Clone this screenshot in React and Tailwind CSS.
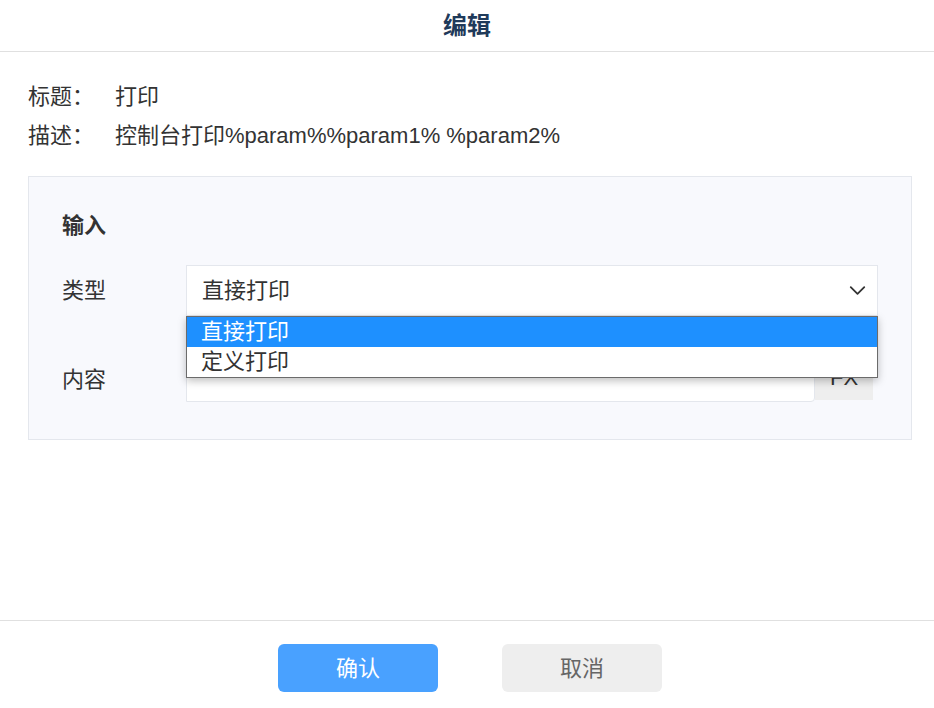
import { ChevronDown } from 'lucide-react';

const FONT = '[font-family:"Liberation_Sans","Noto_Sans_CJK_SC",sans-serif]';

function InfoRow({ label, value }) {
    return (
        <div className="flex h-[39px] items-center">
            <span className="w-[87px] text-[#333]">{label}</span>
            <span className="text-[#333]">{value}</span>
        </div>
    );
}

export default function App() {
    return (
        <div className={`flex h-[708px] w-[934px] flex-col bg-white text-[22px] ${FONT}`}>
            {/* Header */}
            <div className="flex h-[52px] flex-shrink-0 items-center justify-center border-b border-[#e0e0e0]">
                <h3 className="text-[24px] font-bold text-[#1f3a5a]">编辑</h3>
            </div>

            {/* Body */}
            <div className="flex-1 pt-[25px]">
                <div className="pl-[28px]">
                    <InfoRow label="标题：" value="打印" />
                    <InfoRow label="描述：" value="控制台打印%param%%param1% %param2%" />
                </div>

                <div className="ml-[28px] mt-[21px] w-[884px] border border-[#e4e7ed] bg-[#f8f9fd] pb-[37px] pl-[33px] pt-[34px]">
                    <div className="h-[30px] leading-[30px] font-bold text-[#333]">输入</div>

                    {/* Type select */}
                    <div className="mt-[24px] flex items-center">
                        <span className="w-[124px] text-[#333]">类型</span>
                        <div className="relative">
                            <div className="flex h-[51px] w-[692px] items-center justify-between border border-[#e4e7ed] bg-white pl-[15px] pr-[6px] text-[#333]">
                                <span>直接打印</span>
                                <ChevronDown size={27} strokeWidth={1.6} className="text-[#333]" />
                            </div>

                            {/* Open dropdown list */}
                            <div className="absolute left-0 top-[51px] z-10 w-[692px] border border-[#6b6b6b] bg-white shadow-[0_3px_8px_rgba(0,0,0,0.25)]">
                                <div className="h-[30px] bg-[#1e90ff] pl-[14px] leading-[30px] text-white">直接打印</div>
                                <div className="h-[30px] pl-[14px] leading-[30px] text-[#333]">定义打印</div>
                            </div>
                        </div>
                    </div>

                    {/* Content */}
                    <div className="mt-[36px] flex items-center">
                        <span className="w-[124px] pt-[5px] text-[#333]">内容</span>
                        <div className="flex items-start">
                            <div className="h-[50px] w-[629px] rounded-br-[4px] border border-[#e4e7ed] bg-white" />
                            <div className="mt-[3px] flex h-[45px] w-[58px] items-center justify-center bg-[#eeeeee] text-[#333]">FX</div>
                        </div>
                    </div>
                </div>
            </div>

            {/* Footer */}
            <div className="flex h-[88px] flex-shrink-0 justify-center gap-16 border-t border-[#e0e0e0] pl-[6px] pt-[23px]">
                <button className="h-[48px] w-[160px] rounded-[6px] bg-[#49a1ff] text-white">确认</button>
                <button className="h-[48px] w-[160px] rounded-[6px] bg-[#eeeeee] text-[#666]">取消</button>
            </div>
        </div>
    );
}
